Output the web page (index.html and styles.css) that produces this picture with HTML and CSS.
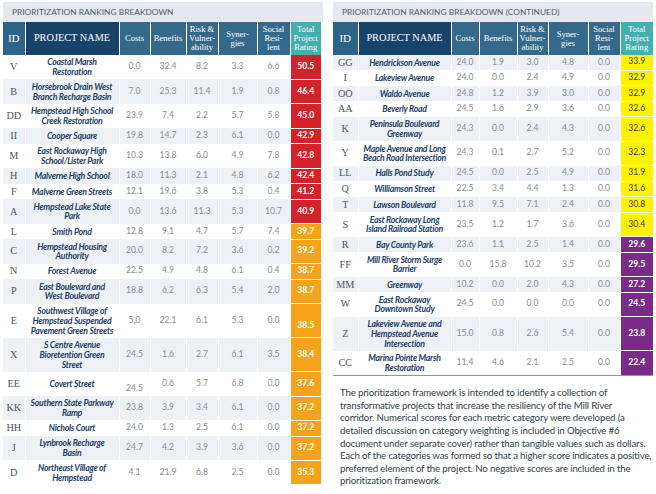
FILE: index.html
```html
<!DOCTYPE html>
<html lang="en">
<head>
<meta charset="utf-8">
<title>Prioritization Ranking Breakdown</title>
<link rel="stylesheet" href="styles.css">
</head>
<body>
<div class="page">
  <section class="panel">
    <h2 class="panel-title">PRIORITIZATION RANKING BREAKDOWN</h2>
    <table class="rank rank-left">
      <colgroup>
        <col class="c-id"><col class="c-name"><col class="c-costs"><col class="c-ben"><col class="c-risk"><col class="c-syn"><col class="c-soc"><col class="c-tot">
      </colgroup>
      <thead>
        <tr>
          <th class="h-id">ID</th><th class="h-name">PROJECT NAME</th><th>Costs</th><th>Benefits</th><th>Risk &amp;<br>Vulner-<br>ability</th><th>Syner-<br>gies</th><th>Social<br>Resi-<br>lent</th><th class="h-total">Total<br>Project<br>Rating</th>
        </tr>
      </thead>
      <tbody>
        <tr><td class="id">V</td><td class="name">Coastal Marsh<br>Restoration</td><td>0.0</td><td>32.4</td><td>8.2</td><td>3.3</td><td>6.6</td><td class="total red">50.5</td></tr>
        <tr><td class="id">B</td><td class="name">Horsebrook Drain West<br>Branch Recharge Basin</td><td>7.0</td><td>25.3</td><td>11.4</td><td>1.9</td><td>0.8</td><td class="total red">46.4</td></tr>
        <tr><td class="id">DD</td><td class="name">Hempstead High School<br>Creek Restoration</td><td>23.9</td><td>7.4</td><td>2.2</td><td>5.7</td><td>5.8</td><td class="total red">45.0</td></tr>
        <tr><td class="id">II</td><td class="name">Cooper Square</td><td>19.8</td><td>14.7</td><td>2.3</td><td>6.1</td><td>0.0</td><td class="total red">42.9</td></tr>
        <tr><td class="id">M</td><td class="name">East Rockaway High<br>School/Lister Park</td><td>10.3</td><td>13.8</td><td>6.0</td><td>4.9</td><td>7.8</td><td class="total red">42.8</td></tr>
        <tr><td class="id">H</td><td class="name">Malverne High School</td><td>18.0</td><td>11.3</td><td>2.1</td><td>4.8</td><td>6.2</td><td class="total red">42.4</td></tr>
        <tr><td class="id">F</td><td class="name">Malverne Green Streets</td><td>12.1</td><td>19.6</td><td>3.8</td><td>5.3</td><td>0.4</td><td class="total red">41.2</td></tr>
        <tr><td class="id">A</td><td class="name">Hempstead Lake State<br>Park</td><td>0.0</td><td>13.6</td><td>11.3</td><td>5.3</td><td>10.7</td><td class="total red">40.9</td></tr>
        <tr><td class="id">L</td><td class="name">Smith Pond</td><td>12.8</td><td>9.1</td><td>4.7</td><td>5.7</td><td>7.4</td><td class="total orange">39.7</td></tr>
        <tr><td class="id">C</td><td class="name">Hempstead Housing<br>Authority</td><td>20.0</td><td>8.2</td><td>7.2</td><td>3.6</td><td>0.2</td><td class="total orange">39.2</td></tr>
        <tr><td class="id">N</td><td class="name">Forest Avenue</td><td>22.5</td><td>4.9</td><td>4.8</td><td>6.1</td><td>0.4</td><td class="total orange">38.7</td></tr>
        <tr><td class="id">P</td><td class="name">East Boulevard and<br>West Boulevard</td><td>18.8</td><td>6.2</td><td>6.3</td><td>5.4</td><td>2.0</td><td class="total orange">38.7</td></tr>
        <tr><td class="id">E</td><td class="name">Southwest Village of<br>Hempstead Suspended<br>Pavement Green Streets</td><td>5.0</td><td>22.1</td><td>6.1</td><td>5.3</td><td>0.0</td><td class="total orange low">38.5</td></tr>
        <tr><td class="id">X</td><td class="name">S Centre Avenue<br>Bioretention Green<br>Street</td><td>24.5</td><td>1.6</td><td>2.7</td><td>6.1</td><td>3.5</td><td class="total orange">38.4</td></tr>
        <tr><td class="id">EE</td><td class="name">Covert Street</td><td class="low">24.5</td><td>0.6</td><td>5.7</td><td>6.8</td><td>0.0</td><td class="total orange">37.6</td></tr>
        <tr><td class="id">KK</td><td class="name">Southern State Parkway<br>Ramp</td><td>23.8</td><td>3.9</td><td>3.4</td><td>6.1</td><td>0.0</td><td class="total orange">37.2</td></tr>
        <tr><td class="id">HH</td><td class="name">Nichols Court</td><td>24.0</td><td>1.3</td><td>2.5</td><td>6.1</td><td>0.0</td><td class="total orange">37.2</td></tr>
        <tr><td class="id">J</td><td class="name">Lynbrook Recharge<br>Basin</td><td>24.7</td><td>4.2</td><td>3.9</td><td>3.6</td><td>0.0</td><td class="total orange">37.2</td></tr>
        <tr><td class="id">D</td><td class="name">Northeast Village of<br>Hempstead</td><td>4.1</td><td>21.9</td><td>6.8</td><td>2.5</td><td>0.0</td><td class="total orange">35.3</td></tr>
      </tbody>
    </table>
  </section>

  <section class="panel">
    <h2 class="panel-title">PRIORITIZATION RANKING BREAKDOWN (CONTINUED)</h2>
    <table class="rank rank-right">
      <colgroup>
        <col class="c-id"><col class="c-name"><col class="c-costs"><col class="c-ben"><col class="c-risk"><col class="c-syn"><col class="c-soc"><col class="c-tot">
      </colgroup>
      <thead>
        <tr>
          <th class="h-id">ID</th><th class="h-name">PROJECT NAME</th><th>Costs</th><th>Benefits</th><th>Risk &amp;<br>Vulner-<br>ability</th><th>Syner-<br>gies</th><th>Social<br>Resi-<br>lent</th><th class="h-total">Total<br>Project<br>Rating</th>
        </tr>
      </thead>
      <tbody>
        <tr><td class="id">GG</td><td class="name">Hendrickson Avenue</td><td>24.0</td><td>1.9</td><td>3.0</td><td>4.8</td><td>0.0</td><td class="total yellow">33.9</td></tr>
        <tr><td class="id">I</td><td class="name">Lakeview Avenue</td><td>24.0</td><td>0.0</td><td>2.4</td><td>4.9</td><td>0.0</td><td class="total yellow">32.9</td></tr>
        <tr><td class="id">OO</td><td class="name">Waldo Avenue</td><td>24.8</td><td>1.2</td><td>3.9</td><td>3.0</td><td>0.0</td><td class="total yellow">32.9</td></tr>
        <tr><td class="id">AA</td><td class="name">Beverly Road</td><td>24.5</td><td>1.6</td><td>2.9</td><td>3.6</td><td>0.0</td><td class="total yellow">32.6</td></tr>
        <tr><td class="id">K</td><td class="name">Peninsula Boulevard<br>Greenway</td><td>24.3</td><td>0.0</td><td>2.4</td><td>4.3</td><td>0.0</td><td class="total yellow">32.6</td></tr>
        <tr><td class="id">Y</td><td class="name">Maple Avenue and Long<br>Beach Road Intersection</td><td>24.3</td><td>0.1</td><td>2.7</td><td>5.2</td><td>0.0</td><td class="total yellow">32.3</td></tr>
        <tr><td class="id">LL</td><td class="name">Halls Pond Study</td><td>24.5</td><td>0.0</td><td>2.5</td><td>4.9</td><td>0.0</td><td class="total yellow">31.9</td></tr>
        <tr><td class="id">Q</td><td class="name">Williamson Street</td><td>22.5</td><td>3.4</td><td>4.4</td><td>1.3</td><td>0.0</td><td class="total yellow">31.6</td></tr>
        <tr><td class="id">T</td><td class="name">Lawson Boulevard</td><td>11.8</td><td>9.5</td><td>7.1</td><td>2.4</td><td>0.0</td><td class="total yellow">30.8</td></tr>
        <tr><td class="id">S</td><td class="name">East Rockaway Long<br>Island Railroad Station</td><td>23.5</td><td>1.2</td><td>1.7</td><td>3.6</td><td>0.0</td><td class="total yellow">30.4</td></tr>
        <tr><td class="id">R</td><td class="name">Bay County Park</td><td>23.6</td><td>1.1</td><td>2.5</td><td>1.4</td><td>0.0</td><td class="total purple">29.6</td></tr>
        <tr><td class="id">FF</td><td class="name">Mill River Storm Surge<br>Barrier</td><td>0.0</td><td>15.8</td><td>10.2</td><td>3.5</td><td>0.0</td><td class="total purple">29.5</td></tr>
        <tr><td class="id">MM</td><td class="name">Greenway</td><td>10.2</td><td>0.0</td><td>2.0</td><td>4.3</td><td>0.0</td><td class="total purple">27.2</td></tr>
        <tr><td class="id">W</td><td class="name">East Rockaway<br>Downtown Study</td><td>24.5</td><td>0.0</td><td>0.0</td><td>0.0</td><td>0.0</td><td class="total purple">24.5</td></tr>
        <tr><td class="id">Z</td><td class="name">Lakeview Avenue and<br>Hempstead Avenue<br>Intersection</td><td>15.0</td><td>0.8</td><td>2.6</td><td>5.4</td><td>0.0</td><td class="total purple">23.8</td></tr>
        <tr><td class="id">CC</td><td class="name">Marina Pointe Marsh<br>Restoration</td><td>11.4</td><td>4.6</td><td>2.1</td><td>2.5</td><td>0.0</td><td class="total purple">22.4</td></tr>
      </tbody>
    </table>
    <p class="note">The prioritization framework is intended to identify a collection of<br>
transformative projects that increase the resiliency of the Mill River<br>
corridor. Numerical scores for each metric category were developed (a<br>
detailed discussion on category weighting is included in Objective #6<br>
document under separate cover) rather than tangible values such as dollars.<br>
Each of the categories was formed so that a higher score indicates a positive,<br>
preferred element of the project. No negative scores are included in the<br>
prioritization framework.</p>
  </section>
</div>
</body>
</html>
```

FILE: styles.css
```css
* {
  box-sizing: border-box;
}

body {
  margin: 0;
  background: #ffffff;
  font-family: Lato, "Liberation Sans", sans-serif;
}

.page {
  display: flex;
  gap: 10px;
  padding: 2px 3px 0 3px;
}

.panel {
  width: 320px;
}

.panel-title {
  margin: 0;
  height: 20px;
  padding-left: 9px;
  background: #e3e9ee;
  color: #555a60;
  font-family: Lato, "Liberation Sans", sans-serif;
  font-weight: 400;
  font-size: 8.4px;
  line-height: 21px;
  white-space: nowrap;
}

.rank {
  width: 100%;
  table-layout: fixed;
  border-collapse: collapse;
}

.rank-left {
  width: 318px;
}

.rank-left .c-id { width: 22px; }
.rank-left .c-name { width: 94px; }
.rank-left .c-costs { width: 31px; }
.rank-left .c-ben { width: 36px; }
.rank-left .c-risk { width: 32px; }
.rank-left .c-syn { width: 39px; }
.rank-left .c-soc { width: 33px; }
.rank-left .c-tot { width: 31px; }

.rank-right .c-id { width: 25px; }
.rank-right .c-name { width: 93px; }
.rank-right .c-costs { width: 28px; }
.rank-right .c-ben { width: 38px; }
.rank-right .c-risk { width: 31px; }
.rank-right .c-syn { width: 40px; }
.rank-right .c-soc { width: 32px; }
.rank-right .c-tot { width: 33px; }

.rank th {
  height: 33px;
  padding: 0 1px;
  background: #35698c;
  color: #ffffff;
  font-family: "Liberation Serif", "DejaVu Serif", serif;
  font-weight: 400;
  font-size: 8.6px;
  line-height: 8.7px;
  text-align: center;
  vertical-align: middle;
  border-left: 1px solid #ffffff;
}

.rank th:first-child {
  border-left: 0;
}

.rank th.h-id {
  background: #2e6487;
  font-size: 11px;
}

.rank th.h-name {
  background: #17426a;
  font-size: 10.3px;
}

.rank th.h-total {
  background: #45afad;
}

.rank td {
  padding: 2.4px 1px;
  line-height: 9.8px;
  font-size: 8.6px;
  color: #8a8c8f;
  text-align: center;
  vertical-align: middle;
  border-left: 1px solid #ffffff;
}

.rank td:first-child {
  border-left: 0;
}

.rank-left tbody tr:nth-child(even) td {
  background: #edf1f5;
}

.rank-right tbody tr:nth-child(odd) td {
  background: #edf1f5;
}

.rank td.id {
  font-family: "Liberation Serif", "DejaVu Serif", serif;
  font-size: 10.2px;
  color: #4d5359;
}

.rank td.name {
  font-weight: 700;
  font-style: italic;
  font-size: 8.7px;
  letter-spacing: -0.25px;
  color: #24406a;
  padding-left: 0;
  padding-right: 0;
}

.rank td.low {
  padding-top: 12px;
}

.rank td.total {
  color: #ffffff;
  font-weight: 700;
  border-bottom: 1px solid #ffffff;
}

.rank-left tbody tr td.red { background: #d2232a; }
.rank-left tbody tr td.orange { background: #f5a31a; }
.rank-right tbody tr td.yellow { background: #fff200; color: #3a3a2a; font-weight: 400; }
.rank-right tbody tr td.purple { background: #7a2b87; }

.rank-right tbody tr:last-child td {
  border-bottom: 1px solid #8197aa;
}

.note {
  margin: 10px -3px 0 0;
  padding: 0 0 0 7px;
  font-family: Lato, "Liberation Sans", sans-serif;
  font-size: 9.7px;
  letter-spacing: -0.17px;
  line-height: 12.6px;
  color: #333f4c;
}
```
